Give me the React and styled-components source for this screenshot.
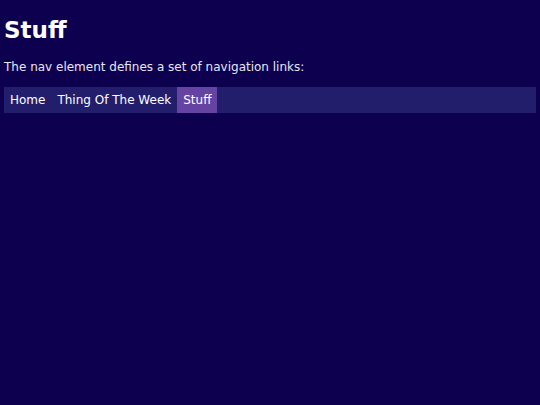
import React from 'react';
import styled, { createGlobalStyle } from 'styled-components';

const GlobalStyle = createGlobalStyle`
  html, body {
    margin: 0;
    background: #0c004f;
    color: #ffffff;
    font-family: "DejaVu Sans", Verdana, sans-serif;
  }
  body {
    padding: 4px;
  }
`;

const Title = styled.h1`
  font-size: 23px;
  font-weight: bold;
  line-height: 28px;
  margin: 12px 0 16px;
`;

const Intro = styled.p`
  font-size: 12px;
  line-height: 15px;
  margin: 0 0 12px;
  color: #e8e6f4;
`;

const Nav = styled.nav`
  display: flex;
  background: #231e6b;
  height: 26px;
`;

const NavLink = styled.a`
  display: flex;
  align-items: center;
  padding: 0 6px;
  font-size: 12px;
  color: #ffffff;
  text-decoration: none;
  background: ${(p) => (p.$active ? '#6443a3' : 'transparent')};
`;

const links = ['Home', 'Thing Of The Week', 'Stuff'];

const App = () => {
  return (
    <>
      <GlobalStyle />
      <Title>Stuff</Title>
      <Intro>The nav element defines a set of navigation links:</Intro>
      <Nav>
        {links.map((l) => (
          <NavLink key={l} href="#" $active={l === 'Stuff'}>
            {l}
          </NavLink>
        ))}
      </Nav>
    </>
  );
};

export default App;
